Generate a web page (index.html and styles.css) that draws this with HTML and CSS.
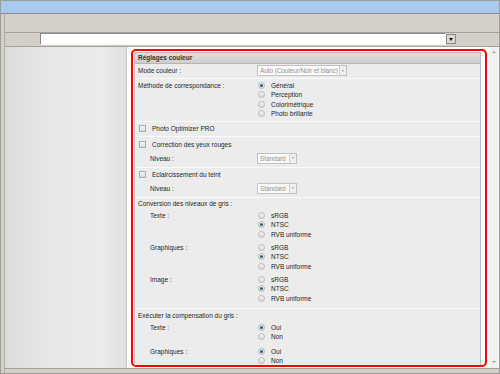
FILE: index.html
```html
<!DOCTYPE html>
<html lang="fr">
<head>
  <meta charset="UTF-8">
  <meta name="viewport" content="width=device-width, initial-scale=1.0">
  <title>Réglages couleur</title>
  <link rel="stylesheet" href="styles.css">
</head>
<body>

  <div class="window">
    <div class="titlebar"></div>

    <div class="frame">
      <div class="toolbar"></div>

      <div class="addressbar">
        <div class="address-field"></div>
        <div class="address-btn"><span class="tri"></span></div>
      </div>

      <div class="main">
        <div class="sidebar"></div>

        <div class="content">
          <!-- red highlight round the settings panel -->
          <div class="highlight">
            <div class="panel">
              <div class="panel-header">Réglages couleur</div>

              <div class="row row-mode">
                <div class="line">
                  <span class="label">Mode couleur :</span>
                  <span class="select wide"><span class="select-text">Auto (Couleur/Noir et blanc)</span><span class="select-btn"></span></span>
                </div>
              </div>

              <div class="row row-method">
                <div class="line multi">
                  <span class="label">Méthode de correspondance :</span>
                  <div class="options">
                    <div class="opt"><span class="radio checked"></span>Général</div>
                    <div class="opt"><span class="radio"></span>Perception</div>
                    <div class="opt"><span class="radio"></span>Colorimétrique</div>
                    <div class="opt"><span class="radio"></span>Photo brillante</div>
                  </div>
                </div>
              </div>

              <div class="row row-optimizer">
                <div class="line check-line"><span class="checkbox"></span>Photo Optimizer PRO</div>
              </div>

              <div class="row row-redeye">
                <div class="line check-line"><span class="checkbox"></span>Correction des yeux rouges</div>
                <div class="line sub-line">
                  <span class="label sub">Niveau :</span>
                  <span class="select small"><span class="select-text">Standard</span><span class="select-btn"></span></span>
                </div>
              </div>

              <div class="row row-skin">
                <div class="line check-line"><span class="checkbox"></span>Eclaircissement du teint</div>
                <div class="line sub-line">
                  <span class="label sub">Niveau :</span>
                  <span class="select small"><span class="select-text">Standard</span><span class="select-btn"></span></span>
                </div>
              </div>

              <div class="row row-gray">
                <div class="line title">Conversion des niveaux de gris :</div>
                <div class="line multi group">
                  <span class="label sub">Texte :</span>
                  <div class="options">
                    <div class="opt"><span class="radio"></span>sRGB</div>
                    <div class="opt"><span class="radio checked"></span>NTSC</div>
                    <div class="opt"><span class="radio"></span>RVB uniforme</div>
                  </div>
                </div>
                <div class="line multi group">
                  <span class="label sub">Graphiques :</span>
                  <div class="options">
                    <div class="opt"><span class="radio"></span>sRGB</div>
                    <div class="opt"><span class="radio checked"></span>NTSC</div>
                    <div class="opt"><span class="radio"></span>RVB uniforme</div>
                  </div>
                </div>
                <div class="line multi group">
                  <span class="label sub">Image :</span>
                  <div class="options">
                    <div class="opt"><span class="radio"></span>sRGB</div>
                    <div class="opt"><span class="radio checked"></span>NTSC</div>
                    <div class="opt"><span class="radio"></span>RVB uniforme</div>
                  </div>
                </div>
              </div>

              <div class="row row-comp">
                <div class="line title">Exécuter la compensation du gris :</div>
                <div class="line multi group">
                  <span class="label sub">Texte :</span>
                  <div class="options">
                    <div class="opt"><span class="radio checked"></span>Oui</div>
                    <div class="opt"><span class="radio"></span>Non</div>
                  </div>
                </div>
                <div class="line multi group group-last">
                  <span class="label sub">Graphiques :</span>
                  <div class="options">
                    <div class="opt"><span class="radio checked"></span>Oui</div>
                    <div class="opt"><span class="radio"></span>Non</div>
                  </div>
                </div>
              </div>
            </div>
          </div>
        </div>

        <div class="scrollbar">
          <span class="arrow up"></span>
          <span class="arrow down"></span>
        </div>
      </div>

      <div class="statusbar"></div>
    </div>
  </div>

</body>
</html>
```

FILE: styles.css
```css
* {
  box-sizing: border-box;
}

body {
  margin: 0;
  font-family: "Liberation Sans", Arial, sans-serif;
  font-size: 6.5px;
  color: #262626;
}

/* Window chrome */
.window {
  width: 500px;
  height: 374px;
  border: 1px solid #9c9c9c;
  background: #d4d0c8;
  display: flex;
  flex-direction: column;
  overflow: hidden;
}

.titlebar {
  flex: none;
  height: 13px;
  background: #a9c9ef;
  border-bottom: 1px solid #8e8e8e;
}

.frame {
  flex: 1;
  margin-left: 3px;
  border-left: 1px solid #b2aea6;
  display: flex;
  flex-direction: column;
}

.toolbar {
  flex: none;
  height: 19px;
  border-bottom: 1px solid #a4a09a;
}

.addressbar {
  flex: none;
  height: 14px;
  border-bottom: 1px solid #a4a09a;
  display: flex;
}

.address-field {
  margin-left: 35px;
  width: 406px;
  height: 12px;
  background: #fff;
  border: 1px solid;
  border-color: #8a8a8a #f4f4f4 #f4f4f4 #8a8a8a;
}

.address-btn {
  width: 10px;
  height: 10px;
  margin-top: 1px;
  background: #dcd8d0;
  border: 1px solid #8a8a8a;
  display: flex;
  align-items: center;
  justify-content: center;
}

.tri {
  border-left: 2.5px solid transparent;
  border-right: 2.5px solid transparent;
  border-top: 3px solid #111;
}

.main {
  flex: none;
  height: 321px;
  display: flex;
  background: #fff;
}

.sidebar {
  width: 122px;
  border-right: 1px solid #c6c6c6;
  background: linear-gradient(to right, #dcdcdc, #e6e6e6 30%, #ebebeb 80%, #e0e0e0);
}

.content {
  width: 362px;
}

.scrollbar {
  width: 10px;
  background: #f1f1f1;
  display: flex;
  flex-direction: column;
  justify-content: space-between;
  align-items: center;
  padding: 4px 0 5px;
}

.arrow {
  border-left: 2px solid transparent;
  border-right: 2px solid transparent;
}

.arrow.up {
  border-bottom: 2px solid #9a9a9a;
}

.arrow.down {
  border-top: 2px solid #9a9a9a;
}

.statusbar {
  flex: 1;
  border-top: 1px solid #a4a09a;
}

/* Settings panel */
.highlight {
  margin: 2px 0 0 4px;
  width: 356px;
  height: 318px;
  border: 2px solid #ff0000;
  border-radius: 5px;
  background: #fff;
  overflow: hidden;
}

.panel {
  margin: 1px 0 0 1px;
  width: 347px;
  border: 1px solid #bcbcbc;
  border-bottom: none;
  background: #ececec;
}

.panel-header {
  height: 11px;
  line-height: 10px;
  padding-left: 3px;
  font-weight: bold;
  color: #333;
  background: linear-gradient(#dedede, #cecece);
  border-bottom: 1px solid #b6b6b6;
}

.row {
  padding-left: 3px;
  border-bottom: 1px solid #fbfbfb;
}

.line {
  display: flex;
  align-items: center;
  height: 10px;
}

.line.multi {
  align-items: flex-start;
  height: auto;
}

.label {
  width: 119px;
  flex: none;
}

.label.sub {
  padding-left: 12px;
}

.multi .label {
  line-height: 9.5px;
}

.options {
  margin-left: 1px;
}

.opt {
  display: flex;
  align-items: center;
  height: 9.5px;
}

.radio {
  width: 7px;
  height: 7px;
  margin-right: 6px;
  border: 1px solid #b9b9b9;
  border-radius: 50%;
  background: linear-gradient(#f2f2f2, #dadada);
  display: flex;
  align-items: center;
  justify-content: center;
}

.radio.checked::after {
  content: "";
  width: 3px;
  height: 3px;
  border-radius: 50%;
  background: #2b5f8c;
}

.checkbox {
  width: 7px;
  height: 7px;
  margin: 0 6px 0 1px;
  border: 1px solid #ababab;
  background: linear-gradient(#f4f4f4, #dcdcdc);
}

.select {
  display: inline-flex;
  align-items: center;
  justify-content: space-between;
  height: 11px;
  padding-left: 2px;
  border: 1px solid #c2c2c2;
  background: #fafafa;
  color: #949494;
  white-space: nowrap;
  overflow: hidden;
}

.select-text {
  overflow: hidden;
  letter-spacing: -0.1px;
}

.select.wide {
  width: 90px;
}

.select.small {
  width: 40px;
}

.select-btn {
  flex: none;
  width: 7px;
  height: 9px;
  border-left: 1px solid #d0d0d0;
  background: #efefef;
  display: flex;
  align-items: center;
  justify-content: center;
}

.select-btn::after {
  content: "";
  border-left: 1.5px solid transparent;
  border-right: 1.5px solid transparent;
  border-top: 2px solid #a0a0a0;
}

/* Row spacing */
.row-mode {
  padding-top: 1px;
  padding-bottom: 2px;
}

.row-mode .line {
  height: 11px;
}

.row-method {
  padding-top: 1.5px;
  padding-bottom: 2.5px;
}

.row-optimizer {
  padding-top: 1.5px;
  padding-bottom: 2.5px;
}

.row-redeye {
  padding-top: 2px;
  padding-bottom: 3px;
}

.row-skin {
  padding-top: 1px;
  padding-bottom: 3px;
}

.sub-line {
  height: 12px;
  margin-top: 3px;
}

.row-gray {
  padding-bottom: 5px;
}

.row-gray .group {
  margin-top: 3.5px;
}

.row-gray .title + .group {
  margin-top: 2.5px;
}

.row-comp {
  padding-top: 1px;
}

.row-comp .title + .group {
  margin-top: 2.5px;
}

.row-comp .group-last {
  margin-top: 5px;
}
```
